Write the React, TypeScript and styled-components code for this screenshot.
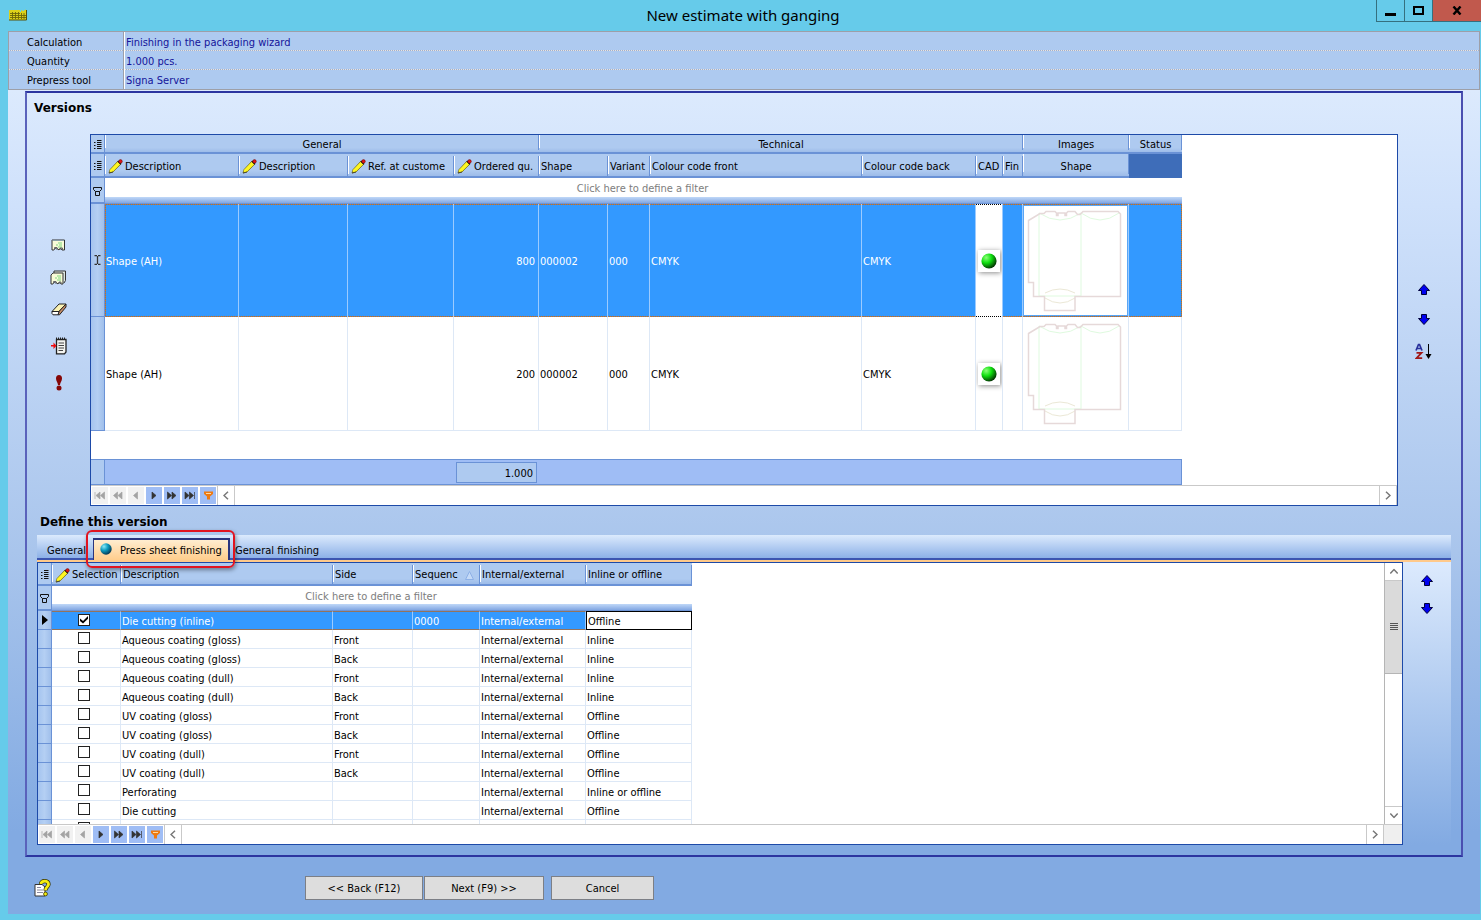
import React from 'react';
import styled, { createGlobalStyle, css } from 'styled-components';

const uiFont = '"DejaVu Sans Condensed", "DejaVu Sans", Tahoma, sans-serif';
const c = {
  frame: '#66cbea',
  header: '#aecaf0',
  line: '#6a92d6',
  dark: '#1d4aa8',
  navy: '#2c35a0',
  select: '#3399ff',
  cell: '#dde8f6',
  summary: '#9fbdf5',
};

const GlobalStyle = createGlobalStyle`
  * { box-sizing: border-box; }
  body { margin: 0; background: ${c.frame}; font: 11px/14px ${uiFont}; color: #000; }
  button, input, output { font: inherit; color: inherit; margin: 0; padding: 0; }
  button { border: 0; background: none; }
  h1, h2 { margin: 0; }
  table { border-collapse: separate; border-spacing: 0; table-layout: fixed; }
  th { font-weight: 400; text-align: left; }
  th, td { padding: 0; }
  svg { display: block; flex: none; }
`;

const Window = styled.div`
  height: 100vh;
  min-height: 760px;
  display: flex;
  flex-direction: column;
  padding: 0 1px 6px 8px;
`;

const TitleBar = styled.header`
  height: 31px;
  flex: none;
  display: grid;
  grid-template-columns: 1fr auto 1fr;
  margin-right: -1px;
`;
const AppIcon = styled.div`
  padding: 9px 0 0 1px;
`;
const Title = styled.h1`
  font: 400 15px/30px "Noto Sans", sans-serif;
  padding-right: 3px;
`;
const WindowControls = styled.div`
  justify-self: end;
  display: flex;
  height: 22px;
`;
const WindowButton = styled.button<{ $close?: boolean }>`
  width: ${(p) => (p.$close ? 49 : 28)}px;
  background: ${(p) => (p.$close ? '#c1594d' : 'transparent')};
  border: 1px solid #35707f;
  border-width: 0 0 1px 1px;
  display: flex;
  align-items: center;
  justify-content: center;
`;

const InfoTable = styled.table`
  flex: none;
  width: 100%;
  background: ${c.header};
  border: 1px solid #9d9fa8;
  th, td {
    height: 19px;
    padding-top: 3px;
    background: linear-gradient(90deg, #ece4dc 50%, #9fb0d0 50%) 0 100% / 2px 1px repeat-x;
  }
  tr:last-child th, tr:last-child td { background: none; }
  th { width: 115px; padding-left: 18px; border-right: 1px solid #9d9fa8; }
  td { padding-left: 1px; border-left: 1px solid #fff; color: #14149a; }
`;

const Body = styled.main`
  flex: 1;
  min-height: 0;
  display: flex;
  flex-direction: column;
  background: linear-gradient(#dceafd, #cfe1fb 14%, #a9c5ec 56%, #82aae2 90%);
`;
const Group = styled.section`
  flex: 1;
  min-height: 0;
  display: flex;
  flex-direction: column;
  margin: 1px 17px 0;
  padding-bottom: 10px;
  border: 2px solid ${c.navy};
  border-color: ${c.navy} #4a4fb0 ${c.navy} #5a62bb;
`;
const Heading = styled.h2<{ $second?: boolean }>`
  font: 700 12px/16px "DejaVu Sans", Verdana, sans-serif;
  padding: ${(p) => (p.$second ? '8px 13px 5px' : '7px 7px 18px')};
`;
const VersionsRow = styled.div`
  display: flex;
  flex: none;
`;
const Rail = styled.div<{ $top: number; $width: number }>`
  flex: none;
  width: ${(p) => p.$width}px;
  padding-top: ${(p) => p.$top}px;
  display: flex;
  flex-direction: column;
  align-items: center;
  gap: 17px;
`;
const RailGroup = styled.div<{ $gap: number }>`
  display: flex;
  flex-direction: column;
  gap: ${(p) => p.$gap}px;
`;
const RightRail = styled(Rail)`
  padding-right: 12px;
`;
const IconButton = styled.button`
  width: 20px;
  height: 20px;
  display: flex;
  align-items: center;
  justify-content: center;
`;

const GridBox = styled.div`
  flex: 1;
  min-width: 0;
  display: flex;
  flex-direction: column;
  background: #fff;
  border: 1px solid ${c.dark};
`;
const GridView = styled.div`
  flex: 1;
  min-height: 0;
  display: flex;
`;
const GridScroll = styled.div`
  flex: 1;
  min-width: 0;
  overflow: hidden;
`;
const Table = styled.table<{ $width: number }>`
  width: ${(p) => p.$width}px;
`;

const HeadCell = styled.th<{ $h: number; $center?: boolean; $full?: boolean }>`
  height: ${(p) => p.$h}px;
  padding: 3px 0 0 ${(p) => (p.$center ? 0 : 2)}px;
  text-align: ${(p) => (p.$center ? 'center' : 'left')};
  white-space: nowrap;
  overflow: hidden;
  border-bottom: 2px solid ${c.line};
  background:
    linear-gradient(#fff, #fff) 0 ${(p) => (p.$full ? 0 : 2)}px / 1px calc(100% - 4px) no-repeat,
    linear-gradient(${c.line}, ${c.line}) 100% ${(p) => (p.$full ? 0 : 2)}px / 1px calc(100% - 2px) no-repeat,
    linear-gradient(${c.header} 75%, #9dbce9);
`;
const HeadLabel = styled.span`
  display: flex;
  align-items: center;
  gap: 2px;
  padding-left: 1px;
`;
const SortLabel = styled(HeadLabel)`
  gap: 7px;
  padding-left: 0;
`;
const StatusFill = styled.th`
  background: #3e6db9;
`;
const IndicatorHead = styled.th<{ $h: number }>`
  height: ${(p) => p.$h}px;
  padding-top: 2px;
  background: ${c.header};
  border-right: 1px solid ${c.line};
  border-bottom: 2px solid ${c.line};
  svg { margin: 0 auto; }
`;
const FilterCell = styled.td`
  height: 25px;
  background: linear-gradient(#c0d8f8, #86aae4 80%, #6089cc) 0 100% / 100% 7px no-repeat, #fff;
  padding: 0 2px 4px 0;
  text-align: center;
`;
const FilterButton = styled.button`
  color: #7d7d7d;
`;

const rowCell = css`
  border-right: 1px solid ${c.cell};
  border-bottom: 1px solid ${c.cell};
  white-space: nowrap;
  overflow: hidden;
`;
const dotLine = (turn: number, a: string, b: string) => `linear-gradient(${turn}deg, ${a} 50%, ${b} 50%)`;
const topBottom = (img: string) => `${img} 0 0 / 2px 1px repeat-x, ${img} 0 100% / 2px 1px repeat-x`;
const dots = topBottom(dotLine(90, '#e0761a', '#56799f'));
const blackDots = topBottom(dotLine(90, '#000', '#fff'));
const sideDots = dotLine(180, '#e0761a', '#56799f');
const VersionRow = styled.tr<{ $selected?: boolean }>`
  height: ${(p) => (p.$selected ? 113 : 114)}px;
  td { ${rowCell} padding: 2px 0 0 1px; }
  ${(p) => p.$selected && css`
    color: #fff;
    td {
      background: ${dots}, ${c.select};
      border-right-color: #9ccbff;
      border-bottom: 0;
    }
    td:first-of-type { background: ${dots}, ${sideDots} 0 0 / 1px 2px repeat-y, ${c.select}; }
    td:last-of-type { border-right: 0; background: ${dots}, ${sideDots} 100% 0 / 1px 2px repeat-y, ${c.select}; }
  `}
  && .number { text-align: right; padding-right: 3px; }
  && .cad {
    padding: 0;
    ${(p) => p.$selected && css`background: ${blackDots}, #fff;`}
  }
  && .image { padding: 0; }
`;
const BallBox = styled.div`
  width: 22px;
  height: 22px;
  margin: 0 auto;
  display: flex;
  align-items: center;
  justify-content: center;
  background: #fff;
  box-shadow: 1px 1px 5px rgba(0, 0, 0, 0.45);
`;
const ImageFrame = styled.div<{ $selected?: boolean }>`
  height: 111px;
  background: ${(p) => (p.$selected ? '#fff' : 'none')};
  border: 1px solid ${(p) => (p.$selected ? '#5aa6f5' : 'transparent')};
`;
const RowIndicator = styled.th`
  background: linear-gradient(90deg, #a5c4ef, #b4cff3 50%, #a0bfeb);
  border-right: 1px solid ${c.line};
  border-bottom: 1px solid ${c.line};
  svg { margin: 0 auto; }
`;
const Gap = styled.td`
  height: 28px;
`;
const SummaryCell = styled.td<{ $indicator?: boolean }>`
  height: 26px;
  background: ${(p) => (p.$indicator ? c.header : c.summary)};
  border-top: 1px solid ${c.line};
  border-bottom: 1px solid ${c.line};
  &:first-child, &:last-child { border-right: 1px solid ${c.line}; }
`;
const Total = styled.output`
  display: block;
  width: 81px;
  height: 21px;
  margin-left: 2px;
  padding-right: 3px;
  text-align: right;
  line-height: 21px;
  background: ${c.header};
  border: 1px solid ${c.line};
`;

const NavBar = styled.div`
  flex: none;
  height: 20px;
  display: flex;
  background: #fff;
  border-top: 1px solid #c9c9c9;
`;
const NavButtons = styled.div`
  display: flex;
  gap: 2px;
  padding: 1px;
`;
const NavButton = styled.button<{ $off?: boolean }>`
  width: 16px;
  height: 17px;
  display: flex;
  align-items: center;
  justify-content: center;
  background: ${(p) => (p.$off ? '#f1f1f1' : c.summary)};
  color: ${(p) => (p.$off ? '#a3a3a3' : '#333')};
`;
const scrollSides = {
  left: { size: '18px', height: '19px', border: '0 1px', turn: 0 },
  right: { size: '18px', height: '19px', border: '0 1px', turn: 180 },
  up: { size: '100%', height: '18px', border: '0 0 1px', turn: 90 },
  down: { size: '100%', height: '18px', border: '1px 0 0', turn: 270 },
};
const ScrollButton = styled.button<{ $side: keyof typeof scrollSides }>`
  flex: none;
  width: ${(p) => scrollSides[p.$side].size};
  height: ${(p) => scrollSides[p.$side].height};
  display: flex;
  align-items: center;
  justify-content: center;
  background: #fff;
  border: 0 solid #c9c9c9;
  border-width: ${(p) => scrollSides[p.$side].border};
  svg { transform: rotate(${(p) => scrollSides[p.$side].turn}deg); }
`;
const Track = styled.div`
  flex: 1;
`;
const Corner = styled.div`
  width: 18px;
  background: #efefef;
`;
const VScroll = styled.div`
  flex: none;
  width: 18px;
  display: flex;
  flex-direction: column;
  border-left: 1px solid #b5b5b5;
`;
const Thumb = styled.div`
  height: 93px;
  display: flex;
  align-items: center;
  justify-content: center;
  background: #dadada;
  border-bottom: 1px solid #b5b5b5;
`;

const TabStrip = styled.div`
  flex: none;
  height: 25px;
  margin: 0 10px;
  display: flex;
  align-items: flex-end;
  background: linear-gradient(#dceafd, #8cb1e7);
  border-bottom: 2px solid #3c55b0;
`;
const Tab = styled.button<{ $w?: number; $pad: number }>`
  height: 15px;
  width: ${(p) => (p.$w ? p.$w + 'px' : 'auto')};
  padding-left: ${(p) => p.$pad}px;
  text-align: left;
`;
const ActiveTab = styled.button`
  position: relative;
  width: 137px;
  height: 22px;
  margin-bottom: -2px;
  padding: 1px 0 0 6px;
  display: flex;
  align-items: center;
  gap: 8px;
  white-space: nowrap;
  background: linear-gradient(#ffedd0, #ffcd8c);
  border: 2px solid #2a357f;
  border-width: 2px 2px 0 1px;
  svg { margin-bottom: 4px; }
`;
const Marker = styled.span`
  position: absolute;
  inset: -10px -7px -8px -8px;
  border: 2px solid #e11420;
  border-radius: 6px;
  box-shadow: 1px 2px 4px rgba(0, 0, 0, 0.4);
  pointer-events: none;
`;
const TabPanel = styled.div`
  flex: 1;
  min-height: 0;
  display: flex;
  margin: 0 10px;
  border-top: 2px solid #ffc98a;
  background: linear-gradient(#dceafd, #82aae2);
`;

const FinishRow = styled.tr<{ $selected?: boolean }>`
  height: 19px;
  td { ${rowCell} height: 19px; padding: ${(p) => (p.$selected ? 2 : 4)}px 0 0 1px; }
  ${(p) => p.$selected && css`
    color: #fff;
    td {
      background: ${c.select};
      border-right-color: #9ccbff;
      border-top: 1px solid #94735c;
      border-bottom: 1px solid #94735c;
    }
    td:last-of-type { background: #fff; color: #000; border: 1px solid #000; }
  `}
  && .check { padding: 0 0 2px; text-align: center; line-height: 0; }
`;
const CheckBox = styled.input`
  appearance: none;
  width: 12px;
  height: 12px;
  margin-right: 4px;
  border: 1px solid #222;
  background: #fff;
  &:checked::after {
    content: '';
    display: block;
    width: 8px;
    height: 8px;
    margin: 1px;
    background: #000;
    clip-path: polygon(0 38%, 38% 68%, 100% 6%, 100% 40%, 38% 100%, 0 68%);
  }
`;

const Footer = styled.footer`
  flex: none;
  height: 57px;
  padding: 19px 0 0 26px;
  display: flex;
`;
const HelpButton = styled.button`
  width: 17px;
  height: 24px;
  margin-right: 254px;
  display: flex;
  align-items: center;
`;
const WizardButtons = styled.div`
  display: flex;
  gap: 1px;
  margin-right: 7px;
`;
const PushButton = styled.button<{ $w: number }>`
  width: ${(p) => p.$w}px;
  height: 24px;
  padding-top: 2px;
  background: #dddddd;
  border: 1px solid #7c7f86;
`;

const Pencil = () => (
  <svg width="15" height="15" viewBox="0 0 15 15">
    <path d="M1 14L2 10.500L9.500 2.500L12.500 5.500L5 13Z" fill="#f6ee1e" stroke="#6b6210" strokeWidth=".7" />
    <path d="M2.500 12.300L10.800 4" stroke="#fff723" strokeWidth="2" />
    <path d="M9.800 2L13 5.200" stroke="#111" strokeWidth="1.300" />
    <path d="M1 14L5 13" stroke="#333" strokeWidth=".8" />
    <circle cx="12.500" cy="2.400" r="1.800" fill="#e01515" stroke="#5a0a0a" strokeWidth=".5" />
  </svg>
);
const ListGlyph = () => (
  <svg width="8" height="10" viewBox="0 0 8 10" stroke="#111" strokeWidth="1">
    <path d="M3 .5H7.500M3 2.500H7.500M3 4.500H7.500M3 6.500H7.500M3 8.500H7.500M0 2.500H1.500M0 5.500H1.500M0 8.500H1.500" />
  </svg>
);
const FilterGlyph = () => (
  <svg width="9" height="11" viewBox="0 0 9 11" fill="none" stroke="#111">
    <path d="M.5 1.500H8.500V3.500L6.500 5.500H2.500L.5 3.500ZM2.500 5.500V9.500H6.500V5.500" />
  </svg>
);
const Cursor = () => (
  <svg width="7" height="10" viewBox="0 0 7 10" fill="none" stroke="#333" strokeWidth="1.300">
    <path d="M.5 .5H3M4 .5H6.500M3.500 1V9M.5 9.500H3M4 9.500H6.500" />
  </svg>
);
const Pointer = () => (
  <svg width="6" height="10" viewBox="0 0 6 10"><path d="M0 0L6 5L0 10Z" /></svg>
);
const Ball = ({ id, colors, size }: { id: string; colors: [string, string, string]; size: number }) => (
  <svg width={size} height={size} viewBox="0 0 16 16">
    <defs>
      <radialGradient id={id} cx=".32" cy=".28" r=".78">
        <stop offset="0" stopColor={colors[0]} />
        <stop offset=".45" stopColor={colors[1]} />
        <stop offset="1" stopColor={colors[2]} />
      </radialGradient>
    </defs>
    <circle cx="8" cy="8" r="7.600" fill={`url(#${id})`} />
  </svg>
);
const ShapeDrawing = () => (
  <svg width="103" height="109" viewBox="2 1 103 109" fill="none">
    <g stroke="#dffadf">
      <path d="M17 8V91M59 8V91M17 8Q38 22 59 8Q78 22 97 8M17 91H59" />
      <path d="M23 88Q38 80 53 88M23 93Q38 103 53 93" stroke="#ebe8d6" />
    </g>
    <path
      d="M6.500 15.500L18 8.500H22L24 6.500H33L34.500 8V10.500H36V8H43V10.500H44.500V8L46 6.500H53L55.500 9.500H58L61 6.500H96L98.500 9V91.500H53V105.500H22.500V91.500H11.500V77.500H6.500Z"
      stroke="#e6d9d9"
      strokeWidth="1.500"
    />
  </svg>
);
const Chevron = () => (
  <svg width="6" height="9" viewBox="0 0 6 9" fill="none" stroke="#777" strokeWidth="1.500">
    <path d="M5 .8L1 4.500L5 8.200" />
  </svg>
);
const Arrow = ({ down }: { down?: boolean }) => (
  <svg width="12" height="12" viewBox="0 0 12 12">
    <path
      d={down ? 'M3.500 .5H8.500V4.500H11.500L6 10.500L.5 4.500H3.500Z' : 'M3.500 11.500H8.500V7.500H11.500L6 1.500L.5 7.500H3.500Z'}
      fill="#0000f0"
      stroke="#00003c"
    />
  </svg>
);
const SortAZ = () => (
  <svg width="17" height="17" viewBox="0 0 17 17" fill="none">
    <path d="M1 7.500L3.500 1.500H4.500L7 7.500M2.500 5.500H6" stroke="#28309c" strokeWidth="1.700" />
    <path d="M1.500 9.800H6.500L1.500 15.200H7.200" stroke="#a01818" strokeWidth="1.800" />
    <path d="M13.500 1V14" stroke="#000" />
    <path d="M10.500 11H16.500L13.500 16Z" fill="#000" />
  </svg>
);
const NewVersion = () => (
  <svg width="15" height="12" viewBox="0 0 15 12">
    <path d="M1 11V1H13.500V11H11L9.500 9L8 11L5 8.500L3 11Z" fill="#f8fbd8" stroke="#333" />
    <path d="M1.500 1.500H13" stroke="#8aa0a8" />
    <path d="M7 4H11M5 6H7M8 6H11M7 8H11" stroke="#7fd87f" strokeWidth="1.200" />
    <path d="M3.500 11V8.500H6V11M9 11V9H11.500V11" fill="none" stroke="#666" />
  </svg>
);
const CopyVersion = () => (
  <svg width="17" height="15" viewBox="0 0 17 15">
    <path d="M4 3V1H15.500V10.500L14 13" fill="#dfe8e2" stroke="#333" />
    <path d="M1 14V5L3 3H13V14H11L9.500 12L8 14L5 11.500L3 14Z" fill="#f8fbd8" stroke="#333" />
    <path d="M7 6H11M5 8H7M8 8H11M7 10H11" stroke="#7fd87f" strokeWidth="1.200" />
    <path d="M3.500 14V11.500H6V14M9 14V12H11V14" fill="none" stroke="#666" />
  </svg>
);
const Eraser = () => (
  <svg width="16" height="13" viewBox="0 0 16 13" strokeLinejoin="round">
    <path d="M1 8.500L8 1H15L8 8.500Z" fill="#fbf3b4" stroke="#222" />
    <path d="M8 8.500L15 1V4L8.500 11.800H7Z" fill="#c98e68" stroke="#222" />
    <path d="M1 8.500H8L7 11.800H2L1 10.500Z" fill="#fff" stroke="#222" />
  </svg>
);
const Notepad = () => (
  <svg width="16" height="18" viewBox="0 0 16 18">
    <path d="M5.500 2.500H15V15L13.500 16.800H5.500Z" fill="#f4f4f0" stroke="#222" strokeWidth="1.300" />
    <path d="M5 1.500H15" stroke="#222" strokeWidth="2" strokeDasharray="1 1" />
    <path d="M7.500 6H13M7.500 8.500H13M7.500 11H13M7.500 13.500H12" stroke="#444" strokeWidth="1.200" />
    <path d="M0 8H2.500V5.500L5.500 8.700L2.500 12V9.500H0Z" fill="#f00a0a" />
  </svg>
);
const Exclaim = () => (
  <svg width="8" height="16" viewBox="0 0 8 16" fill="#850606">
    <path d="M4 0C6 0 7 1.500 7 3.500C7 6 5.200 7.500 5 10H3C2.800 7.500 1 6 1 3.500C1 1.500 2 0 4 0Z" />
    <circle cx="4" cy="13" r="2.500" />
  </svg>
);
const HelpIcon = () => (
  <svg width="17" height="18" viewBox="0 0 17 18">
    <path d="M1 5.500H8L11 8V17H1Z" fill="#fff" stroke="#333" />
    <path d="M3 8.500H7M3 11H9M3 13.500H9" stroke="#8a8aa0" />
    <path d="M7 5C7 1 15 1 14.500 5.500C14.200 8 11.500 8 11.500 11.500" fill="none" stroke="#3a3600" strokeWidth="4.200" />
    <path d="M7 5C7 1 15 1 14.500 5.500C14.200 8 11.500 8 11.500 11.300" fill="none" stroke="#f5ee10" strokeWidth="2.800" />
    <circle cx="11.500" cy="15" r="1.900" fill="#f5ee10" stroke="#3a3600" strokeWidth=".8" />
  </svg>
);
const Logo = () => (
  <svg width="18" height="12" viewBox="0 0 18 12">
    <path d="M0 1H11V3H12V1L14 2L17 .5V11H0Z" fill="#dcd11a" />
    <path d="M1 4.500H11M1 6.500H17M1 8.500H17M3.500 3V10M6.500 3V10M9.500 3V10M12.500 4V10M15 4V10" stroke="#6d6608" strokeWidth=".9" />
    <path d="M0 11H17.500V1" fill="none" stroke="#55510a" />
  </svg>
);

const navGlyphs: Record<string, React.ReactNode> = {
  'First record': <path d="M1 1V8M6 1L2 4.500L6 8ZM10.500 1L6.500 4.500L10.500 8Z" />,
  'Previous page': <path d="M5.500 1L1.500 4.500L5.500 8ZM10 1L6 4.500L10 8Z" />,
  'Previous record': <path d="M7.500 1L3.500 4.500L7.500 8Z" />,
  'Next record': <path d="M4 1L8 4.500L4 8Z" />,
  'Next page': <path d="M1.500 1L5.500 4.500L1.500 8ZM6 1L10 4.500L6 8Z" />,
  'Last record': <path d="M1 1L5 4.500L1 8ZM5.500 1L9.500 4.500L5.500 8ZM10.500 1V8" />,
};

const Navigator = ({ corner }: { corner?: boolean }) => (
  <NavBar>
    <NavButtons>
      {Object.entries(navGlyphs).map(([label, glyph], i) => (
        <NavButton key={label} aria-label={label} $off={i < 3}>
          <svg width="12" height="9" viewBox="0 0 12 9" fill="currentColor" stroke="currentColor" strokeWidth=".7">
            {glyph}
          </svg>
        </NavButton>
      ))}
      <NavButton aria-label="Filter">
        <svg width="9" height="9" viewBox="0 0 9 9">
          <path d="M0 .5H9V3L6 5.500V8.500H3V5.500L0 3Z" fill="#ef7a10" />
          <path d="M2 2.500H7" stroke="#ffd9a0" />
        </svg>
      </NavButton>
    </NavButtons>
    <ScrollButton $side="left" aria-label="Scroll left"><Chevron /></ScrollButton>
    <Track />
    <ScrollButton $side="right" aria-label="Scroll right"><Chevron /></ScrollButton>
    {corner && <Corner />}
  </NavBar>
);

const info = [
  ['Calculation', 'Finishing in the packaging wizard'],
  ['Quantity', '1.000 pcs.'],
  ['Prepress tool', 'Signa Server'],
];
const versionCols = [14, 134, 109, 106, 85, 69, 42, 212, 114, 27, 20, 106, 53];
const versionHeads: { label: string; edit?: boolean; center?: boolean }[] = [
  { label: 'Description', edit: true },
  { label: 'Description', edit: true },
  { label: 'Ref. at custome', edit: true },
  { label: 'Ordered qu.', edit: true },
  { label: 'Shape' },
  { label: 'Variant' },
  { label: 'Colour code front' },
  { label: 'Colour code back' },
  { label: 'CAD' },
  { label: 'Fin' },
  { label: 'Shape', center: true },
];
const versions = [
  { qty: '800', selected: true },
  { qty: '200', selected: false },
];
const finishCols = [14, 69, 212, 80, 67, 106, 106];
const finishes = [
  ['Die cutting (inline)', '', '0000', 'Offline'],
  ['Aqueous coating (gloss)', 'Front', '', 'Inline'],
  ['Aqueous coating (gloss)', 'Back', '', 'Inline'],
  ['Aqueous coating (dull)', 'Front', '', 'Inline'],
  ['Aqueous coating (dull)', 'Back', '', 'Inline'],
  ['UV coating (gloss)', 'Front', '', 'Offline'],
  ['UV coating (gloss)', 'Back', '', 'Offline'],
  ['UV coating (dull)', 'Front', '', 'Offline'],
  ['UV coating (dull)', 'Back', '', 'Offline'],
  ['Perforating', '', '', 'Inline or offline'],
  ['Die cutting', '', '', 'Offline'],
  ['', '', '', ''],
];

const Columns = ({ widths }: { widths: number[] }) => (
  <colgroup>{widths.map((w, i) => <col key={i} width={w} />)}</colgroup>
);

const VersionsTable = () => (
  <Table $width={1091}>
    <Columns widths={versionCols} />
    <thead>
      <tr>
        <IndicatorHead $h={19}><ListGlyph /></IndicatorHead>
        <HeadCell $h={19} $center $full colSpan={4}>General</HeadCell>
        <HeadCell $h={19} $center $full colSpan={6}>Technical</HeadCell>
        <HeadCell $h={19} $center $full>Images</HeadCell>
        <HeadCell $h={19} $center $full>Status</HeadCell>
      </tr>
      <tr>
        <IndicatorHead $h={24}><ListGlyph /></IndicatorHead>
        {versionHeads.map((h, i) => (
          <HeadCell key={i} $h={24} $center={h.center} $full={h.center}>
            {h.edit ? <HeadLabel><Pencil />{h.label}</HeadLabel> : h.label}
          </HeadCell>
        ))}
        <StatusFill />
      </tr>
      <tr>
        <IndicatorHead $h={26}><FilterGlyph /></IndicatorHead>
        <FilterCell colSpan={12}><FilterButton>Click here to define a filter</FilterButton></FilterCell>
      </tr>
    </thead>
    <tbody>
      {versions.map((v, i) => (
        <VersionRow key={v.qty} $selected={v.selected}>
          <RowIndicator>{v.selected && <Cursor />}</RowIndicator>
          <td>Shape (AH)</td>
          <td />
          <td />
          <td className="number">{v.qty}</td>
          <td>000002</td>
          <td>000</td>
          <td>CMYK</td>
          <td>CMYK</td>
          <td className="cad">
            <BallBox><Ball id={`cad${i}`} size={16} colors={['#8dff7a', '#0fe00f', '#022802']} /></BallBox>
          </td>
          <td />
          <td className="image"><ImageFrame $selected={v.selected}><ShapeDrawing /></ImageFrame></td>
          <td />
        </VersionRow>
      ))}
    </tbody>
    <tfoot>
      <tr><Gap colSpan={13} /></tr>
      <tr>
        <SummaryCell $indicator />
        <SummaryCell colSpan={3} />
        <SummaryCell><Total>1.000</Total></SummaryCell>
        <SummaryCell colSpan={8} />
      </tr>
    </tfoot>
  </Table>
);

const FinishingTable = () => (
  <Table $width={654}>
    <Columns widths={finishCols} />
    <thead>
      <tr>
        <IndicatorHead $h={23}><ListGlyph /></IndicatorHead>
        <HeadCell $h={23}><HeadLabel><Pencil />Selection</HeadLabel></HeadCell>
        <HeadCell $h={23}>Description</HeadCell>
        <HeadCell $h={23}>Side</HeadCell>
        <HeadCell $h={23}>
          <SortLabel>
            Sequenc
            <svg width="9" height="9" viewBox="0 0 9 9"><path d="M4.500 .5L8.500 8.500H.5Z" fill="#c5daf7" stroke="#8db0e6" /></svg>
          </SortLabel>
        </HeadCell>
        <HeadCell $h={23}>Internal/external</HeadCell>
        <HeadCell $h={23}>Inline or offline</HeadCell>
      </tr>
      <tr>
        <IndicatorHead $h={25}><FilterGlyph /></IndicatorHead>
        <FilterCell colSpan={6}><FilterButton>Click here to define a filter</FilterButton></FilterCell>
      </tr>
    </thead>
    <tbody>
      {finishes.map(([name, side, seq, mode], i) => (
        <FinishRow key={i} $selected={i === 0}>
          <RowIndicator>{i === 0 && <Pointer />}</RowIndicator>
          <td className="check"><CheckBox type="checkbox" defaultChecked={i === 0} aria-label={`Select ${name} ${side}`} /></td>
          <td>{name}</td>
          <td>{side}</td>
          <td>{seq}</td>
          <td>{name && 'Internal/external'}</td>
          <td>{mode}</td>
        </FinishRow>
      ))}
    </tbody>
  </Table>
);

export default function App() {
  return (
    <Window>
      <GlobalStyle />
      <TitleBar>
        <AppIcon><Logo /></AppIcon>
        <Title>New estimate with ganging</Title>
        <WindowControls>
          <WindowButton aria-label="Minimize">
            <svg width="11" height="12" viewBox="0 0 11 12"><path d="M0 8H11V11H0Z" /></svg>
          </WindowButton>
          <WindowButton aria-label="Maximize">
            <svg width="11" height="9" viewBox="0 0 11 9" fill="none" stroke="#000" strokeWidth="2"><path d="M1 1H10V8H1Z" /></svg>
          </WindowButton>
          <WindowButton $close aria-label="Close">
            <svg width="10" height="9" viewBox="0 0 10 9" stroke="#000" strokeWidth="2.400"><path d="M1.500 .5L8.500 8.500M8.500 .5L1.500 8.500" /></svg>
          </WindowButton>
        </WindowControls>
      </TitleBar>
      <InfoTable>
        <tbody>
          {info.map(([k, v]) => (
            <tr key={k}><th scope="row">{k}</th><td>{v}</td></tr>
          ))}
        </tbody>
      </InfoTable>
      <Body>
        <Group>
          <Heading>Versions</Heading>
          <VersionsRow>
            <Rail $top={101} $width={63}>
              <RailGroup $gap={12}>
                <IconButton aria-label="New version"><NewVersion /></IconButton>
                <IconButton aria-label="Copy version"><CopyVersion /></IconButton>
                <IconButton aria-label="Delete version"><Eraser /></IconButton>
              </RailGroup>
              <RailGroup $gap={17}>
                <IconButton aria-label="Import list"><Notepad /></IconButton>
                <IconButton aria-label="Messages"><Exclaim /></IconButton>
              </RailGroup>
            </Rail>
            <GridBox>
              <VersionsTable />
              <Navigator />
            </GridBox>
            <RightRail $top={145} $width={63}>
              <RailGroup $gap={11}>
                <IconButton aria-label="Move version up"><Arrow /></IconButton>
                <IconButton aria-label="Move version down"><Arrow down /></IconButton>
                <IconButton aria-label="Sort"><SortAZ /></IconButton>
              </RailGroup>
            </RightRail>
          </VersionsRow>
          <Heading $second>Define this version</Heading>
          <TabStrip role="tablist">
            <Tab role="tab" $w={56} $pad={10}>General</Tab>
            <ActiveTab role="tab" aria-selected="true">
              <Ball id="tabBall" size={12} colors={['#8be9f5', '#0d9cc0', '#04304a']} />
              Press sheet finishing
              <Marker />
            </ActiveTab>
            <Tab role="tab" $pad={5}>General finishing</Tab>
          </TabStrip>
          <TabPanel role="tabpanel">
            <GridBox>
              <GridView>
                <GridScroll><FinishingTable /></GridScroll>
                <VScroll>
                  <ScrollButton $side="up" aria-label="Scroll up"><Chevron /></ScrollButton>
                  <Thumb>
                    <svg width="8" height="8" viewBox="0 0 8 8" stroke="#555"><path d="M0 .5H8M0 2.500H8M0 4.500H8M0 6.500H8" /></svg>
                  </Thumb>
                  <Track />
                  <ScrollButton $side="down" aria-label="Scroll down"><Chevron /></ScrollButton>
                </VScroll>
              </GridView>
              <Navigator corner />
            </GridBox>
            <Rail $top={8} $width={48}>
              <RailGroup $gap={9}>
                <IconButton aria-label="Move operation up"><Arrow /></IconButton>
                <IconButton aria-label="Move operation down"><Arrow down /></IconButton>
              </RailGroup>
            </Rail>
          </TabPanel>
        </Group>
        <Footer>
          <HelpButton aria-label="Help"><HelpIcon /></HelpButton>
          <WizardButtons>
            <PushButton $w={118}>&lt;&lt; Back (F12)</PushButton>
            <PushButton $w={120}>Next (F9) &gt;&gt;</PushButton>
          </WizardButtons>
          <PushButton $w={103}>Cancel</PushButton>
        </Footer>
      </Body>
    </Window>
  );
}
